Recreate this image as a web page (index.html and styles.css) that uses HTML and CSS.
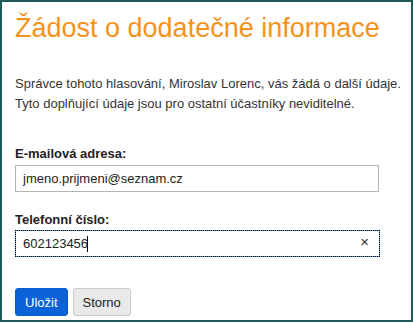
FILE: index.html
```html
<!DOCTYPE html>
<html lang="cs">

<head>
    <meta charset="UTF-8">
    <meta name="viewport" content="width=device-width, initial-scale=1.0">
    <link rel="stylesheet" href="styles.css">
    <title>Žádost o dodatečné informace</title>
</head>

<body>
    <div class="dialog">
        <h1 class="title">Žádost o dodatečné informace</h1>
        <p class="intro">Správce tohoto hlasování, Miroslav Lorenc, vás žádá o další údaje.<br>
            Tyto doplňující údaje jsou pro ostatní účastníky neviditelné.</p>

        <form class="info-form">
            <div class="field">
                <label for="email">E-mailová adresa:</label>
                <input id="email" type="text" value="jmeno.prijmeni@seznam.cz" />
            </div>
            <div class="field">
                <label for="phone">Telefonní číslo:</label>
                <div class="input-wrap">
                    <input id="phone" class="focused" type="text" value="602123456" />
                    <span class="caret"></span>
                    <span class="clear">&#x2715;</span>
                </div>
            </div>
            <div class="buttons">
                <button type="button" class="btn btn-primary">Uložit</button>
                <button type="button" class="btn">Storno</button>
            </div>
        </form>
    </div>
</body>

</html>
```

FILE: styles.css
```css
body {
    margin: 0;
    background: #ffffff;
    font-family: "Liberation Sans", Arial, sans-serif;
    color: #333333;
}

.dialog {
    width: 413px;
    height: 322px;
    box-sizing: border-box;
    border: 2px solid #1f5c57;
    padding: 11px 0 0 13px;
    overflow: hidden;
}

.title {
    margin: 0;
    font-size: 27px;
    font-weight: normal;
    line-height: 31px;
    color: #f5921b;
    white-space: nowrap;
}

.intro {
    margin: 30px 0 0;
    font-size: 13px;
    line-height: 19.5px;
    white-space: nowrap;
}

.info-form {
    display: flex;
    flex-direction: column;
    margin-top: 31px;
}

.field {
    display: flex;
    flex-direction: column;
    margin-bottom: 18px;
}

.field label {
    font-size: 13px;
    font-weight: bold;
    line-height: 19.5px;
    color: #222222;
    margin-bottom: 1px;
}

.field input {
    width: 364px;
    height: 27px;
    box-sizing: border-box;
    border: 1px solid #b4b4b4;
    padding: 0 7px;
    font-family: "Liberation Sans", Arial, sans-serif;
    font-size: 13px;
    color: #222222;
    outline: 0;
}

.input-wrap {
    position: relative;
    width: 365px;
}

.field input.focused {
    width: 365px;
    border: 1px solid #5a94d8;
    outline: 1px dotted #000000;
    outline-offset: -1px;
}

.caret {
    position: absolute;
    left: 72px;
    top: 6px;
    width: 1px;
    height: 16px;
    background: #000000;
}

.clear {
    position: absolute;
    right: 11px;
    top: 6px;
    font-size: 11px;
    color: #333333;
}

.buttons {
    display: flex;
    gap: 5px;
    margin-top: 13px;
}

.btn {
    height: 28px;
    padding: 0 9px;
    border: 1px solid #cccccc;
    border-radius: 3px;
    background: #e9e9e9;
    font-family: "Liberation Sans", Arial, sans-serif;
    font-size: 13px;
    color: #222222;
    cursor: pointer;
}

.btn-primary {
    background: #0b62d6;
    border-color: #0b5cc8;
    color: #ffffff;
}
```
